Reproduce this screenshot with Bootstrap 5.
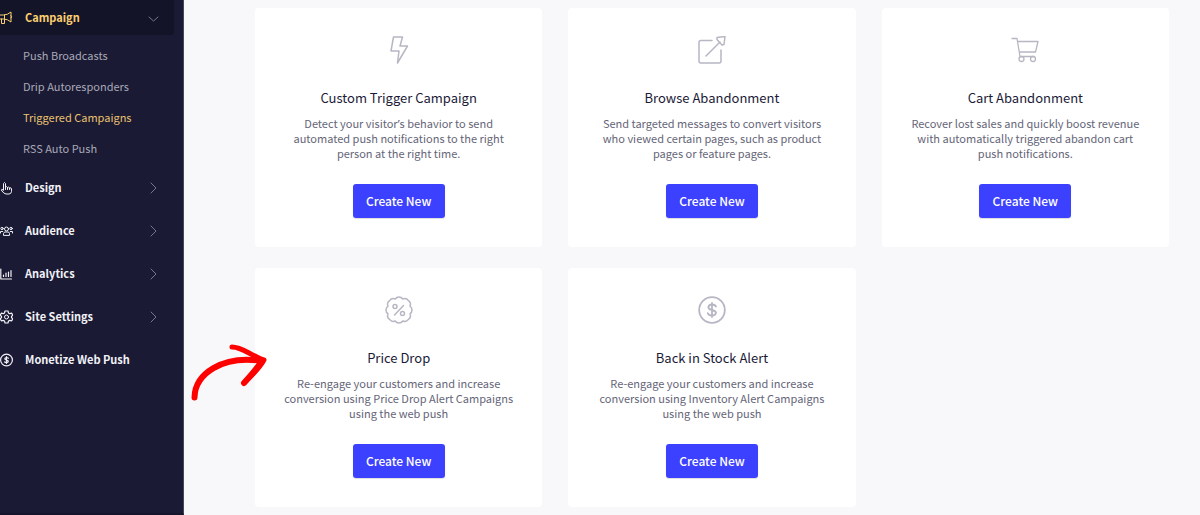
<!DOCTYPE html>
<html lang="en">
<head>
<meta charset="utf-8">
<meta name="viewport" content="width=device-width, initial-scale=1">
<title>Triggered Campaigns</title>
<link rel="stylesheet" href="https://cdn.jsdelivr.net/npm/bootstrap@5.3.0/dist/css/bootstrap.min.css">
<style>
body{font-family:"Noto Sans CJK SC","Noto Sans",sans-serif;background:#f8f8fb;font-size:11px}
a{text-decoration:none}
svg{fill:none;stroke:currentColor;stroke-linecap:round;stroke-linejoin:round}
.side{width:184px;background:#1a1a35;border-right:1px solid #45455f;border-bottom:2px solid #15152c}
.side-link{height:43px;color:#f1f1f6;font-size:11px;font-weight:700;padding-right:24px}
.side-link.open{height:35px;margin-right:9px;padding-right:15px;background:#141429;color:#fbcf70;border-bottom-right-radius:3px}
.side-link .ico{width:13px;height:14px;margin-right:12px;flex:none}
.side-link .chev{width:12px;height:12px;margin-left:auto;color:#77778c}
.sub-menu{padding:5px 0 2px 23px}
.sub-menu a{height:31px;color:#a9a9b6}
.sub-menu a.current{color:#ebc16e}
.content{padding:8px 31px 8px 71px}
.content .row{--bs-gutter-x:26px;--bs-gutter-y:21px}
.tile{border:0;border-radius:4px;padding:28px 24px 29px}
.tile-ico{width:28px;height:28px;color:#b7b7c4;margin-bottom:24px}
.tile h2{font-size:13px;line-height:20px;font-weight:400;color:#1b1b38;margin:0 0 8px}
.tile p{line-height:15px;color:#656578;margin:0 0 23px}
.latin{font-family:"Noto Sans",sans-serif}
.create{--bs-btn-bg:#3c41ff;--bs-btn-color:#fff;--bs-btn-hover-bg:#2b30e6;--bs-btn-hover-color:#fff;width:92px;height:34px;padding:0;border:0;border-radius:3px;font-size:12px;font-weight:500;box-shadow:0 1px 1px #0002}
.pointer{left:190px;top:342px;width:78px;height:60px;color:#f00;pointer-events:none}
</style>
</head>
<body>
<div class="d-flex min-vh-100 position-relative">
<nav class="side flex-shrink-0" aria-label="Main">
  <a href="#" class="side-link open d-flex align-items-center">
    <svg class="ico" viewBox="0 0 13 14"><path d="M0 4h3.500q4 0 7.500-3v10q-3.500-3-7.500-3H0M4.500 4v4M1.500 8v4.500h3V8M11 4.500q1.500 1 0 2.500"/></svg>Campaign
    <svg class="chev" viewBox="0 0 12 12"><path d="M2 5l4.500 4L11 5"/></svg></a>
  <div class="sub-menu">
    <a href="#" class="d-flex align-items-center">Push Broadcasts</a>
    <a href="#" class="d-flex align-items-center">Drip Autoresponders</a>
    <a href="#" class="d-flex align-items-center current">Triggered Campaigns</a>
    <a href="#" class="d-flex align-items-center">RSS Auto Push</a>
  </div>
  <a href="#" class="side-link d-flex align-items-center">
    <svg class="ico" viewBox="0 0 13 14"><path d="M3.500 9V2.500q1-2 2 0V6q1.200-1 2 .5 1.200-1 2 .5 1.800-.8 2 1v2.500q-.3 2.500-2.500 2.500H6Q4 13 1.200 9q0-1.500 2.300 0M5.500 6v2.500M7.500 6.500v2M9.500 7v1.500"/></svg>Design
    <svg class="chev" viewBox="0 0 12 12"><path d="M4 1l5 5-5 5"/></svg></a>
  <a href="#" class="side-link d-flex align-items-center">
    <svg class="ico" viewBox="0 0 13 14"><circle cx="6.500" cy="5" r="2"/><circle cx="2" cy="4.500" r="1.200"/><circle cx="11" cy="4.500" r="1.200"/><path d="M3.500 11V9.500Q4 8 5 8h3q1.500.2 1.500 1.500V11zM.5 9V7.500h2.200M12.500 9V7.500h-2.200"/></svg>Audience
    <svg class="chev" viewBox="0 0 12 12"><path d="M4 1l5 5-5 5"/></svg></a>
  <a href="#" class="side-link d-flex align-items-center">
    <svg class="ico" viewBox="0 0 13 14"><path d="M.8 2v10h10.700M3.500 9.500V8M6 9.500V6M8.500 9.500V5M11 9.500V3.500" stroke-width="1.200"/></svg>Analytics
    <svg class="chev" viewBox="0 0 12 12"><path d="M4 1l5 5-5 5"/></svg></a>
  <a href="#" class="side-link d-flex align-items-center">
    <svg class="ico" viewBox="0 0 13 14"><path stroke-width="1.200" d="M5 1h3l.5 2 1.200.7 2-.5 1.100 2L11.500 6.500v1l1.300 1.300-1.100 2-2-.5-1.200.7L8 13H5l-.5-2-1.200-.7-2 .5-1.100-2L1.500 7.500v-1L.2 5.200l1.100-2 2 .5L4.500 3z"/><circle cx="6.500" cy="7" r="2"/></svg>Site Settings
    <svg class="chev" viewBox="0 0 12 12"><path d="M4 1l5 5-5 5"/></svg></a>
  <a href="#" class="side-link d-flex align-items-center">
    <svg class="ico" viewBox="0 0 13 14" stroke-width="1.200"><circle cx="6.500" cy="7" r="5.900"/><path d="M8.500 5.200Q6.500 3.800 5 5.200q-.5 1.400 1.500 1.800t1.800 1.700Q6.500 10.200 4.500 9M6.500 3.500v7"/></svg>Monetize Web Push</a>
</nav>
<main class="content flex-grow-1">
  <div class="row row-cols-3">
    <div class="col"><section class="card tile align-items-center text-center">
      <svg class="tile-ico" viewBox="0 0 28 28" stroke-width="1.500"><path d="M8.500 1h9L15 10h7.500L12.500 27l1.500-12H6z"/></svg>
      <h2>Custom Trigger Campaign</h2>
      <p>Detect your visitor<span class="latin">’</span>s behavior to send<br>automated push notifications to the right<br>person at the right time.</p>
      <button type="button" class="btn create">Create New</button></section></div>
    <div class="col"><section class="card tile align-items-center text-center">
      <svg class="tile-ico" viewBox="0 0 28 28" stroke-width="1.500"><path d="M14 4.500H3q-2 0-2 2V25q0 2 2 2h18q2 0 2-2V14M8 20L22 6M19 1.500l8-1-1 8-2 .5-5-5.500z"/></svg>
      <h2>Browse Abandonment</h2>
      <p>Send targeted messages to convert visitors<br>who viewed certain pages, such as product<br>pages or feature pages.</p>
      <button type="button" class="btn create">Create New</button></section></div>
    <div class="col"><section class="card tile align-items-center text-center">
      <svg class="tile-ico" viewBox="0 0 28 28" stroke-width="1.300"><path d="M1 2.500h5L9 20.500h14M6.500 5.500H27L24.500 16H8.200"/><circle cx="10.500" cy="23" r="2.500"/><circle cx="22" cy="23" r="2.500"/></svg>
      <h2>Cart Abandonment</h2>
      <p>Recover lost sales and quickly boost revenue<br>with automatically triggered abandon cart<br>push notifications.</p>
      <button type="button" class="btn create">Create New</button></section></div>
    <div class="col"><section class="card tile align-items-center text-center">
      <svg class="tile-ico" viewBox="0 0 28 28" stroke-width="1.500"><path d="M10.200 3a4.600 4.600 0 0 1 7.600 0 4.600 4.600 0 0 1 5.600 1.600 4.600 4.600 0 0 1 1.600 5.600 4.600 4.600 0 0 1 0 7.600 4.600 4.600 0 0 1-1.600 5.600 4.600 4.600 0 0 1-5.600 1.600 4.600 4.600 0 0 1-7.600 0 4.600 4.600 0 0 1-5.600-1.600A4.600 4.600 0 0 1 3 17.800a4.600 4.600 0 0 1 0-7.600 4.600 4.600 0 0 1 1.600-5.600A4.600 4.600 0 0 1 10.200 3zM18.500 9.500l-9 9.500"/><circle cx="10" cy="10.500" r="2"/><circle cx="17.500" cy="17.500" r="2"/></svg>
      <h2>Price Drop</h2>
      <p>Re-engage your customers and increase<br>conversion using Price Drop Alert Campaigns<br>using the web push</p>
      <button type="button" class="btn create">Create New</button></section></div>
    <div class="col"><section class="card tile align-items-center text-center">
      <svg class="tile-ico" viewBox="0 0 28 28" stroke-width="1.800"><circle cx="14" cy="14" r="12.800"/><path d="M18 10.500Q17 8.500 14 8.500t-3.700 2.700Q10.500 13.500 14 14t4 2.800Q17.500 19.500 14 19.500t-4.200-2.300M14 7v14"/></svg>
      <h2>Back in Stock Alert</h2>
      <p>Re-engage your customers and increase<br>conversion using Inventory Alert Campaigns<br>using the web push</p>
      <button type="button" class="btn create">Create New</button></section></div>
  </div>
</main>
<svg class="pointer position-absolute" viewBox="190 342 78 60" stroke-width="5" aria-hidden="true"><path stroke-width="6" d="M194.500 397.500C195 374 222 355 262 361"/><path d="M232 347Q238 347 249 353T264 360Q260 368 244 383"/><path d="M261 362Q256 370 244 383" stroke-width="6"/></svg>
</div>
<script src="https://cdn.jsdelivr.net/npm/bootstrap@5.3.0/dist/js/bootstrap.bundle.min.js"></script>
</body>
</html>
